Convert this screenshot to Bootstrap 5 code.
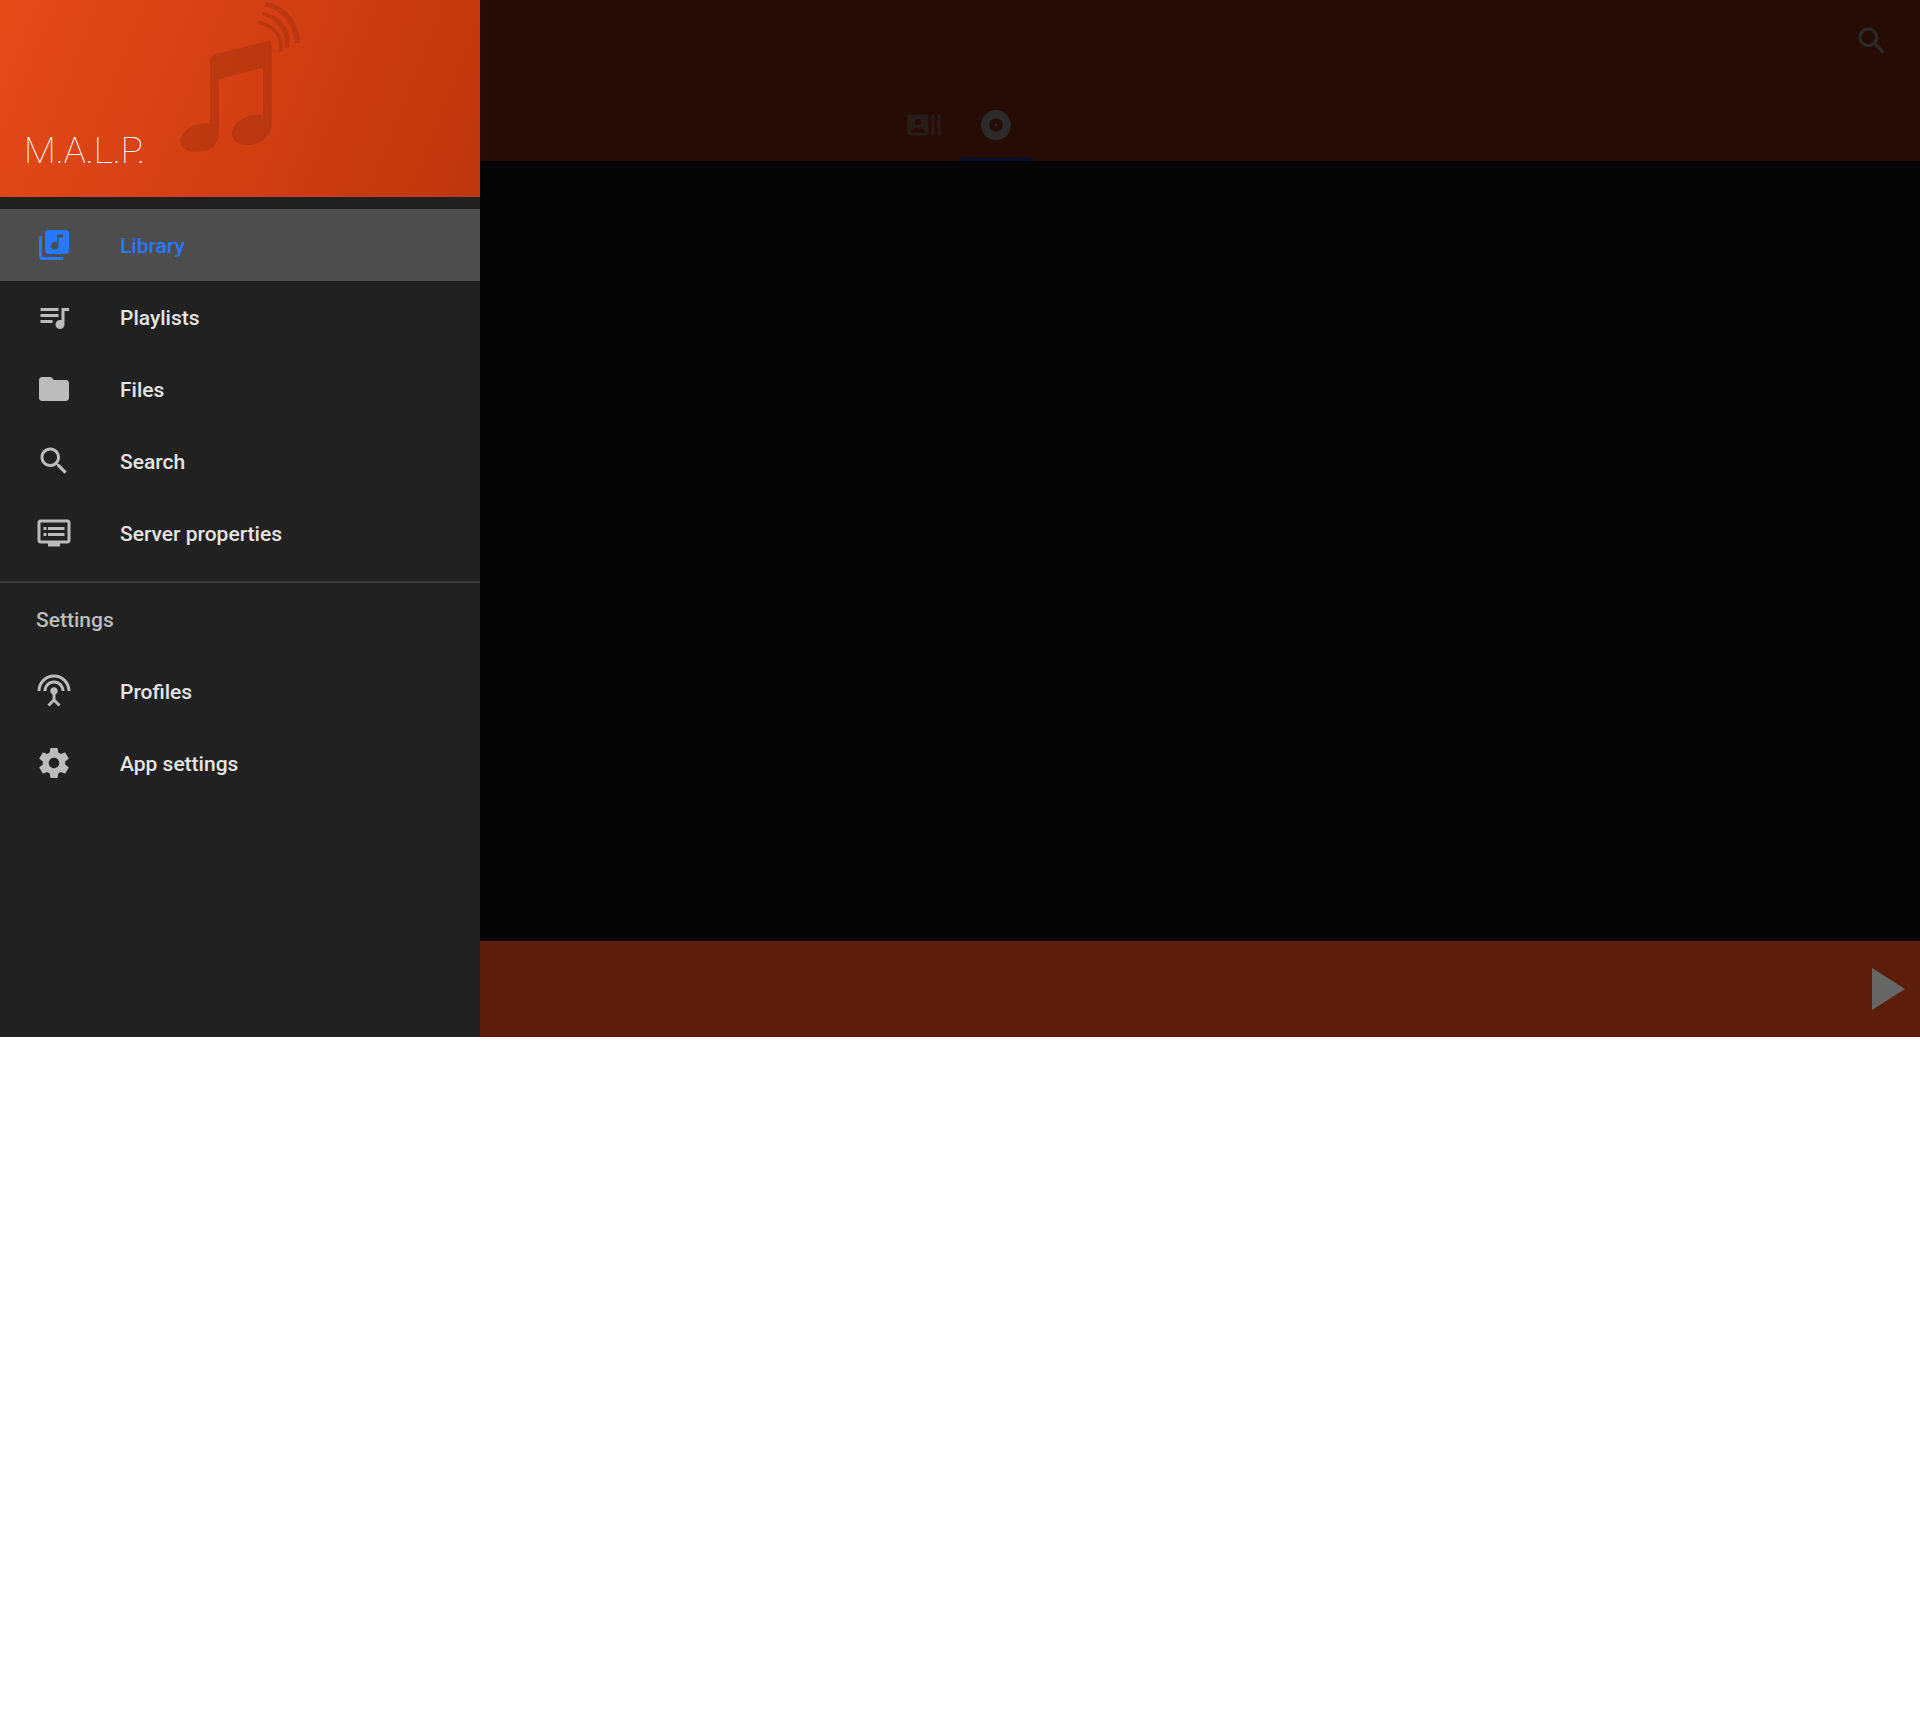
<!DOCTYPE html>
<html lang="en">
<head>
<meta charset="utf-8">
<meta name="viewport" content="width=device-width, initial-scale=1">
<title>M.A.L.P.</title>
<link href="https://cdn.jsdelivr.net/npm/bootstrap@5.3.0/dist/css/bootstrap.min.css" rel="stylesheet">
<style>
  body { font-family: Roboto, "Noto Sans", sans-serif; background: #fff; }
  .player-app { min-height: 1037px; }
  .top-bar { background: #260c05; color: #2b2b2b; }
  .top-actions { padding: 23px 30px 30px; }
  .library-tabs .nav-link { width: 72px; height: 72px; color: #2b2b2b; border-bottom: 3px solid transparent; border-top: 3px solid transparent; border-radius: 0; }
  .library-tabs .nav-link.inactive { color: #281c19; }
  .library-tabs .nav-link.active { border-bottom-color: #02102d; }
  .glyph { width: 36px; height: 36px; fill: currentColor; display: block; flex: none; }
  .stage { background: #050505; }
  .now-playing { background: #5c1e0b; height: 96px; color: #666; }
  .now-playing .glyph { width: 72px; height: 72px; }
  .icon-btn { background: none; border: 0; padding: 0; color: inherit; }
  .drawer { width: 480px; max-width: 100%; background: #212121; }
  .drawer-head { height: 197px; padding: 0 24px 24px; background: linear-gradient(112deg, #e64a19, #d13e12 55%, #bf360c); }
  .drawer-title { font-size: 37px; line-height: 44px; font-weight: 100; color: #fff; }
  .drawer-logo { width: 140px; height: 160px; }
  .drawer-menu { padding: 12px 0; }
  .drawer .nav-link { height: 72px; padding: 0 36px; gap: 48px; font-size: 21px; line-height: 28px; font-weight: 500; color: #e4e4e4; border-radius: 0; }
  .drawer .nav-link span { padding-top: 2px; }
  .drawer .nav-link .glyph { color: #bcbcbc; }
  .drawer .nav-link.active, .drawer .nav-link.active .glyph { color: #2979ff; }
  .drawer .nav-link.active { background: #4d4d4d; }
  .drawer-group { border-top: 2px solid #3c3c3c; }
  .group-title { height: 72px; padding: 2px 36px 0; font-size: 21px; line-height: 28px; font-weight: 500; color: #bcbcbc; }
</style>
</head>
<body>
<div class="player-app position-relative d-flex flex-column">
  <header class="top-bar">
    <div class="top-actions d-flex justify-content-end">
      <button type="button" class="icon-btn" aria-label="Search">
        <svg class="glyph" viewBox="0 0 24 24" aria-hidden="true"><path d="M15.500 14h-.79l-.28-.27C15.410 12.590 16 11.110 16 9.500 16 5.910 13.090 3 9.500 3S3 5.910 3 9.500 5.910 16 9.500 16c1.610 0 3.090-.59 4.230-1.570l.27.28v.79l5 4.990L20.490 19l-4.990-5zm-6 0C7.010 14 5 11.990 5 9.500S7.010 5 9.500 5 14 7.010 14 9.500 11.990 14 9.500 14z"/></svg>
      </button>
    </div>
    <nav class="library-tabs nav justify-content-center" aria-label="Library views">
      <a class="nav-link inactive p-0 d-flex align-items-center justify-content-center" href="#artists" aria-label="Artists">
        <svg class="glyph" viewBox="0 0 24 24" aria-hidden="true"><path d="M21 5v14h2V5h-2zm-4 14h2V5h-2v14zM14 5H2c-.55 0-1 .45-1 1v12c0 .55.45 1 1 1h12c.55 0 1-.45 1-1V6c0-.55-.45-1-1-1zM8 7.750c1.240 0 2.250 1.010 2.250 2.250S9.240 12.250 8 12.250 5.750 11.240 5.750 10 6.760 7.750 8 7.750zM12.500 17h-9v-.75c0-1.500 3-2.250 4.500-2.250s4.500.75 4.500 2.250V17z"/></svg>
      </a>
      <a class="nav-link active p-0 d-flex align-items-center justify-content-center" href="#albums" aria-label="Albums" aria-current="page">
        <svg class="glyph" viewBox="0 0 24 24" aria-hidden="true"><path d="M12 2C6.480 2 2 6.480 2 12s4.480 10 10 10 10-4.480 10-10S17.520 2 12 2zm0 14.500c-2.490 0-4.500-2.010-4.500-4.500S9.510 7.500 12 7.500s4.500 2.010 4.500 4.500-2.010 4.500-4.500 4.500zm0-5.500c-.55 0-1 .45-1 1s.45 1 1 1 1-.45 1-1-.45-1-1-1z"/></svg>
      </a>
    </nav>
  </header>
  <main class="stage flex-grow-1"></main>
  <footer class="now-playing d-flex align-items-center justify-content-end">
    <button type="button" class="icon-btn" aria-label="Play">
      <svg class="glyph" viewBox="0 0 24 24" aria-hidden="true"><path d="M8 5v14l11-7z"/></svg>
    </button>
  </footer>

  <aside class="drawer position-absolute top-0 start-0 h-100">
    <div class="drawer-head position-relative d-flex align-items-end">
      <svg class="drawer-logo position-absolute top-0 start-50 translate-middle-x" viewBox="0 0 420 480" aria-hidden="true">
        <g fill="#000" fill-opacity=".11">
          <path d="M120 371V181Q120 168 135 163L293 123Q305 120 305 133V374C305 410 268 435 228 435C204 435 186 422 186 402C186 369 226 338 279 345V203L147 238V400C147 435 122 456 80 456C50 456 30 442 30 423C30 396 73 364 120 371Z"/>
          <path d="M288 6C347 15 388 65 390 129H375C371 73 338 30 285 20Z"/>
          <path d="M278 35C329 44 365 86 360 138Q356 144 345 145C351 95 321 56 274 46Z"/>
          <path d="M266 62C315 70 346 107 338 152Q333 157 324 158C337 115 307 79 263 73Z"/>
        </g>
      </svg>
      <h1 class="drawer-title m-0 position-relative">M.A.L.P.</h1>
    </div>
    <nav aria-label="Main menu">
      <div class="drawer-menu nav flex-column">
        <a class="nav-link active d-flex align-items-center" href="#library" aria-current="page">
          <svg class="glyph" viewBox="0 0 24 24" aria-hidden="true"><path d="M20 2H8c-1.100 0-2 .9-2 2v12c0 1.100.9 2 2 2h12c1.100 0 2-.9 2-2V4c0-1.100-.9-2-2-2zm-2 5h-3v5.500c0 1.380-1.120 2.500-2.500 2.500S10 13.880 10 12.500s1.120-2.500 2.500-2.500c.57 0 1.080.19 1.500.51V5h4v2zM4 6H2v14c0 1.100.9 2 2 2h14v-2H4V6z"/></svg>
          <span>Library</span>
        </a>
        <a class="nav-link d-flex align-items-center" href="#playlists">
          <svg class="glyph" viewBox="0 0 24 24" aria-hidden="true"><path d="M15 6H3v2h12V6zm0 4H3v2h12v-2zM3 16h8v-2H3v2zM17 6v8.180c-.31-.11-.65-.18-1-.18-1.660 0-3 1.340-3 3s1.340 3 3 3 3-1.340 3-3V8h3V6h-5z"/></svg>
          <span>Playlists</span>
        </a>
        <a class="nav-link d-flex align-items-center" href="#files">
          <svg class="glyph" viewBox="0 0 24 24" aria-hidden="true"><path d="M10 4H4c-1.100 0-1.990.9-1.990 2L2 18c0 1.100.9 2 2 2h16c1.100 0 2-.9 2-2V8c0-1.100-.9-2-2-2h-8l-2-2z"/></svg>
          <span>Files</span>
        </a>
        <a class="nav-link d-flex align-items-center" href="#search">
          <svg class="glyph" viewBox="0 0 24 24" aria-hidden="true"><path d="M15.500 14h-.79l-.28-.27C15.410 12.590 16 11.110 16 9.500 16 5.910 13.090 3 9.500 3S3 5.910 3 9.500 5.910 16 9.500 16c1.610 0 3.090-.59 4.230-1.570l.27.28v.79l5 4.990L20.490 19l-4.990-5zm-6 0C7.010 14 5 11.990 5 9.500S7.010 5 9.500 5 14 7.010 14 9.500 11.990 14 9.500 14z"/></svg>
          <span>Search</span>
        </a>
        <a class="nav-link d-flex align-items-center" href="#server">
          <svg class="glyph" viewBox="0 0 24 24" aria-hidden="true"><path d="M21 3H3c-1.100 0-2 .9-2 2v12c0 1.100.9 2 2 2h5v2h8v-2h5c1.100 0 1.990-.9 1.990-2L23 5c0-1.100-.9-2-2-2zm0 14H3V5h18v12zm-2-9H8v2h11V8zm0 4H8v2h11v-2zM7 8H5v2h2V8zm0 4H5v2h2v-2z"/></svg>
          <span>Server properties</span>
        </a>
      </div>
      <div class="drawer-group nav flex-column">
        <h2 class="group-title m-0 d-flex align-items-center">Settings</h2>
        <a class="nav-link d-flex align-items-center" href="#profiles">
          <svg class="glyph" viewBox="0 0 24 24" aria-hidden="true"><path d="M12 5c-3.870 0-7 3.130-7 7h2c0-2.760 2.240-5 5-5s5 2.240 5 5h2c0-3.870-3.130-7-7-7zm1 9.290c.88-.39 1.500-1.260 1.500-2.290 0-1.380-1.120-2.500-2.500-2.500S9.500 10.620 9.500 12c0 1.020.62 1.900 1.500 2.290v3.300L7.590 21 9 22.410l3-3 3 3L16.410 21 13 17.590v-3.300zM12 1C5.930 1 1 5.930 1 12h2c0-4.970 4.030-9 9-9s9 4.030 9 9h2c0-6.070-4.930-11-11-11z"/></svg>
          <span>Profiles</span>
        </a>
        <a class="nav-link d-flex align-items-center" href="#settings">
          <svg class="glyph" viewBox="0 0 24 24" aria-hidden="true"><path d="M19.430 12.980c.04-.32.07-.64.07-.98s-.03-.66-.07-.98l2.110-1.650c.19-.15.24-.42.12-.64l-2-3.460c-.12-.22-.39-.3-.61-.22l-2.490 1c-.52-.4-1.080-.73-1.690-.98l-.38-2.650C14.460 2.180 14.250 2 14 2h-4c-.25 0-.46.18-.49.42l-.38 2.650c-.61.25-1.170.59-1.690.98l-2.490-1c-.23-.09-.49 0-.61.22l-2 3.460c-.13.22-.07.49.12.64l2.110 1.650c-.04.32-.07.65-.07.98s.03.66.07.98l-2.110 1.650c-.19.15-.24.42-.12.64l2 3.460c.12.22.39.3.61.22l2.490-1c.52.4 1.080.73 1.690.98l.38 2.650c.03.24.24.42.49.42h4c.25 0 .46-.18.49-.42l.38-2.650c.61-.25 1.170-.59 1.690-.98l2.490 1c.23.09.49 0 .61-.22l2-3.460c.12-.22.07-.49-.12-.64l-2.110-1.650zM12 15.500c-1.930 0-3.500-1.570-3.500-3.500s1.570-3.500 3.500-3.500 3.500 1.570 3.500 3.500-1.570 3.500-3.500 3.500z"/></svg>
          <span>App settings</span>
        </a>
      </div>
    </nav>
  </aside>
</div>
<script src="https://cdn.jsdelivr.net/npm/bootstrap@5.3.0/dist/js/bootstrap.bundle.min.js"></script>
</body>
</html>
